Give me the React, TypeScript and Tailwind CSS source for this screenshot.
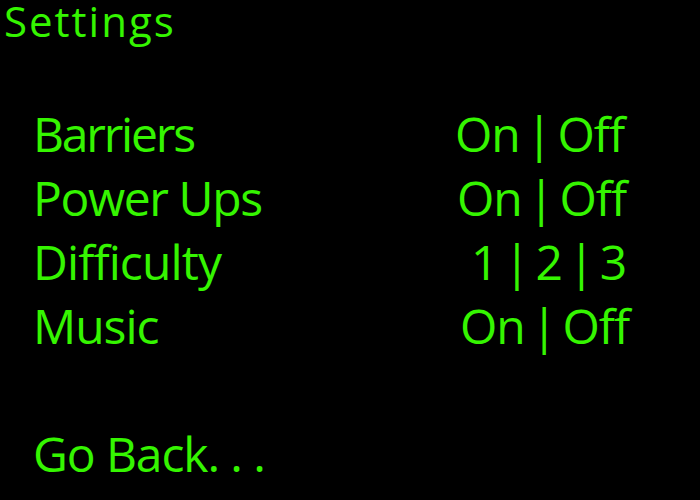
import React from "react";

const rows: { label: string; parts: string[]; ml: string; lt: string }[] = [
  { label: "Barriers", parts: ["On", "Off"], ml: "ml-[-2px]", lt: "tracking-[-2.2px]" },
  { label: "Power Ups", parts: ["On", "Off"], ml: "ml-0", lt: "tracking-[-1.4px]" },
  { label: "Difficulty", parts: ["1", "2", "3"], ml: "ml-[14px]", lt: "tracking-[-0.9px]" },
  { label: "Music", parts: ["On", "Off"], ml: "ml-[3px]", lt: "tracking-[-1px]" },
];

function Value({ parts }: { parts: string[] }) {
  return (
    <div className="whitespace-pre tracking-[-1.1px]">
      {parts.map((p, i) => (
        <React.Fragment key={i}>
          {i > 0 && (
            <>
              {" "}
              <span className="mx-[-5px]">|</span>{" "}
            </>
          )}
          {p}
        </React.Fragment>
      ))}
    </div>
  );
}

export default function App() {
  return (
    <div
      className="w-[700px] h-[500px] bg-black text-[#35f500] overflow-hidden"
      style={{ fontFamily: '"Open Sans", "Noto Sans", sans-serif' }}
    >
      <div className="pl-[4px] text-[42px] leading-[42px] tracking-[2px]">Settings</div>
      <div className="mt-[60px] pl-[33px] text-[48px] leading-[64px]">
        {rows.map((r) => (
          <div key={r.label} className="flex">
            <div className={`w-[424px] whitespace-pre ${r.lt}`}>{r.label}</div>
            <div className={r.ml}>
              <Value parts={r.parts} />
            </div>
          </div>
        ))}
        <div className="h-[64px]" />
        <div className="whitespace-pre tracking-[-1.1px]">Go Back. . .</div>
      </div>
    </div>
  );
}
